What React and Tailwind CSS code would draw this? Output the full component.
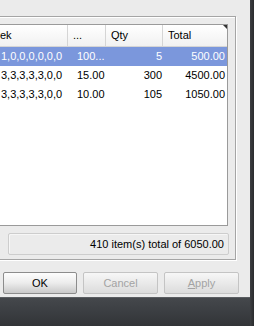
const rows = [
  { days: "1,0,0,0,0,0,0", price: "100...", qty: "5", total: "500.00", selected: true },
  { days: "3,3,3,3,3,0,0", price: "15.00", qty: "300", total: "4500.00" },
  { days: "3,3,3,3,3,0,0", price: "10.00", qty: "105", total: "1050.00" },
]

const Button = ({ children, disabled, width }) => (
  <button
    className={
      "h-[22px] rounded-[2px] border text-[11px] " +
      width +
      (disabled
        ? " border-[#c4c4c4] bg-gradient-to-b from-[#f7f7f7] to-[#dcdcdc] text-[#a3a3a3]"
        : " border-[#8c8c8c] bg-gradient-to-b from-[#fdfdfd] via-[#ececec] to-[#c9c9c9] text-black")
    }
  >
    {children}
  </button>
)

export default function App() {
  return (
    <div className="flex h-[326px] w-[254px] overflow-hidden bg-[#ebebeb] font-['Liberation_Sans',Arial,sans-serif] text-[11px] leading-none">
      <div className="flex w-[250px] flex-col">
        {/* dialog body */}
        <div className="h-[297px] overflow-hidden pt-[16px]">
          <div className="ml-[-20px] flex h-[244px] w-[256px] flex-col border border-[#a5a5a5] px-[7px] pt-[7px] shadow-[1px_1px_0_#fff,inset_1px_1px_0_#fff]">
            {/* list view */}
            <div className="flex h-[202px] flex-col border border-[#9a9a9a] bg-white">
              <div className="relative flex h-[22px] border-b border-[#d5d5d5] bg-gradient-to-b from-white to-[#f1f1f1] text-black">
                <div className="flex w-[79px] items-center border-r border-[#d5d5d5] pl-[11px]">ek</div>
                <div className="flex w-[38px] items-center border-r border-[#d5d5d5] pl-[5px]">...</div>
                <div className="flex w-[57px] items-center border-r border-[#d5d5d5] pl-[5px]">Qty</div>
                <div className="flex flex-1 items-center pl-[5px]">Total</div>
                <svg className="absolute right-0 top-0" width="4" height="4" viewBox="0 0 4 4">
                  <path d="M0 0H4V4Z" fill="#333" />
                </svg>
              </div>
              {rows.map((r, i) => (
                <div
                  key={i}
                  className={
                    "flex h-[19px] items-center " +
                    (r.selected ? "bg-[#7b97dc] text-white" : "text-black")
                  }
                >
                  <div className="w-[80px] pl-[12px]">{r.days}</div>
                  <div className="w-[38px] pl-[8px]">{r.price}</div>
                  <div className="w-[57px] pr-[2px] text-right">{r.qty}</div>
                  <div className="flex-1 pr-[2px] text-right">{r.total}</div>
                </div>
              ))}
            </div>
            {/* status */}
            <div className="ml-auto mr-[-1px] mt-[7px] flex h-[22px] w-[221px] items-center justify-end rounded-[2px] border border-[#cdcdcd] pr-[4px] text-black shadow-[inset_1px_1px_0_#f6f6f6]">
              410 item(s) total of 6050.00
            </div>
          </div>
          {/* buttons */}
          <div className="mt-[12px] flex gap-[6px] pl-[3px]">
            <Button width="w-[74px]">OK</Button>
            <Button width="w-[75px]" disabled>Cancel</Button>
            <Button width="w-[75px]" disabled>
              <span className="underline">A</span>pply
            </Button>
          </div>
        </div>
        <div className="h-[29px] border-t border-[#5a5d61] bg-gradient-to-b from-[#45484c] via-[#3b3e42] to-[#323437]" />
      </div>
      <div className="w-[4px] bg-gradient-to-r from-[#3d3f42] to-[#2a2b2d]" />
    </div>
  )
}
